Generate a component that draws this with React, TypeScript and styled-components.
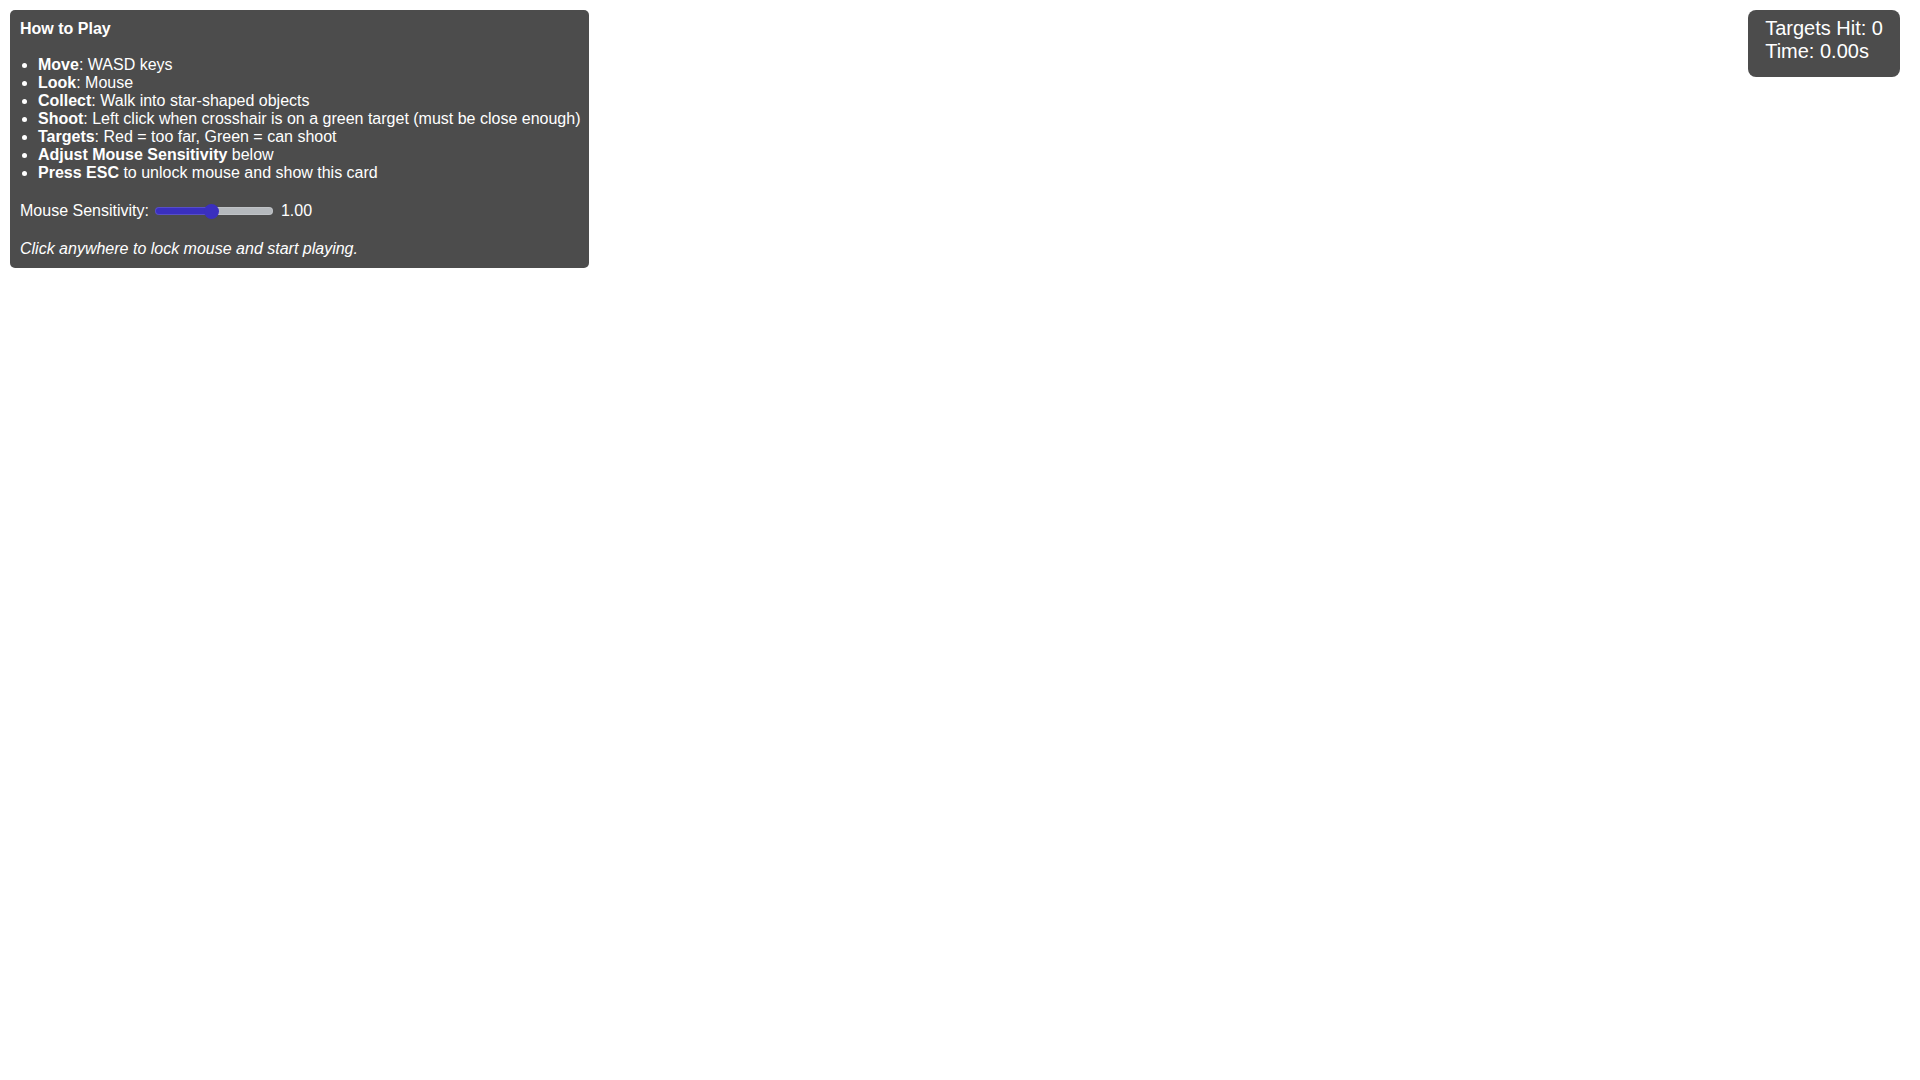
import { useState } from 'react';
import styled, { createGlobalStyle } from 'styled-components';

const GlobalStyle = createGlobalStyle`
  html, body {
    margin: 0;
    padding: 0;
    background: #ffffff;
    font-family: 'Liberation Sans', Arial, sans-serif;
  }
`;

const Page = styled.div`
  position: relative;
  width: 100vw;
  height: 100vh;
  overflow: hidden;
  background: #ffffff;
`;

const InstructionsCard = styled.div`
  position: absolute;
  top: 10px;
  left: 10px;
  padding: 10px 9px 10px 10px;
  background: rgba(0, 0, 0, 0.7);
  color: #ffffff;
  border-radius: 5px;
  font-size: 16px;
  line-height: 18px;
`;

const Heading = styled.div`
  font-weight: bold;
`;

const RuleList = styled.ul`
  margin: 18px 0 16px;
  padding-left: 18px;
`;

const Rule = styled.li`
  list-style: disc;
`;

const SliderRow = styled.div`
  display: flex;
  align-items: center;
  height: 26px;
`;

const SliderLabel = styled.label`
  margin-right: 6px;
`;

const Range = styled.input<{ $fill: number }>`
  -webkit-appearance: none;
  appearance: none;
  width: 118px;
  height: 16px;
  margin: 0 8px 0 0;
  background: transparent;
  cursor: pointer;

  &::-webkit-slider-runnable-track {
    height: 8px;
    border-radius: 4px;
    background: linear-gradient(
      to right,
      #3a2fbf 0%,
      #3a2fbf ${(p) => p.$fill}%,
      #b5b9bd ${(p) => p.$fill}%,
      #b5b9bd 100%
    );
    box-shadow: inset 0 0 0 1px rgba(255, 255, 255, 0.15);
  }

  &::-webkit-slider-thumb {
    -webkit-appearance: none;
    appearance: none;
    width: 15px;
    height: 15px;
    margin-top: -3.5px;
    border-radius: 50%;
    background: #3a2fbf;
    border: none;
  }
`;

const Hint = styled.p`
  margin: 16px 0 0;
  font-style: italic;
`;

const Hud = styled.div`
  position: absolute;
  top: 10px;
  right: 20px;
  padding: 7px 17px 14px;
  background: rgba(0, 0, 0, 0.7);
  color: #ffffff;
  border-radius: 8px;
  font-size: 20px;
  line-height: 23px;
`;

const RULES: { key: string; text: string }[] = [
  { key: 'Move', text: ': WASD keys' },
  { key: 'Look', text: ': Mouse' },
  { key: 'Collect', text: ': Walk into star-shaped objects' },
  { key: 'Shoot', text: ': Left click when crosshair is on a green target (must be close enough)' },
  { key: 'Targets', text: ': Red = too far, Green = can shoot' },
  { key: 'Adjust Mouse Sensitivity', text: ' below' },
  { key: 'Press ESC', text: ' to unlock mouse and show this card' },
];

const MIN = 0.1;
const MAX = 2;

export default function App() {
  const [sensitivity, setSensitivity] = useState<number>(1);
  const fraction = (sensitivity - MIN) / (MAX - MIN);
  // track fill runs to the thumb centre (thumb 15px on a 118px input)
  const fill = ((7.5 + fraction * (118 - 15)) / 118) * 100;

  return (
    <Page>
      <GlobalStyle />
      <InstructionsCard>
        <Heading>How to Play</Heading>
        <RuleList>
          {RULES.map((rule) => (
            <Rule key={rule.key}>
              <strong>{rule.key}</strong>
              {rule.text}
            </Rule>
          ))}
        </RuleList>
        <SliderRow>
          <SliderLabel htmlFor="sensitivity">Mouse Sensitivity:</SliderLabel>
          <Range
            id="sensitivity"
            type="range"
            min={MIN}
            max={MAX}
            step={0.01}
            value={sensitivity}
            $fill={fill}
            onChange={(e) => setSensitivity(parseFloat(e.target.value))}
          />
          <span>{sensitivity.toFixed(2)}</span>
        </SliderRow>
        <Hint>Click anywhere to lock mouse and start playing.</Hint>
      </InstructionsCard>

      <Hud>
        <div>Targets Hit: 0</div>
        <div>Time: 0.00s</div>
      </Hud>
    </Page>
  );
}
